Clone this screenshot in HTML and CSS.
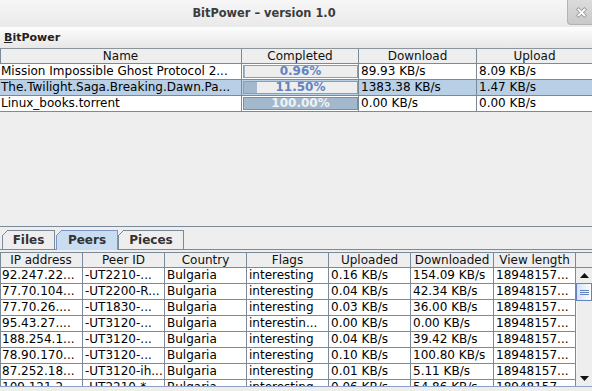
FILE: index.html
```html
<!DOCTYPE html>
<html lang="en">
<head>
    <meta charset="UTF-8">
    <title>BitPower - version 1.0</title>
    <link rel="stylesheet" href="styles.css">
</head>
<body>
    <div class="titlebar">
        <span class="title">BitPower – version 1.0</span>
        <div class="close">
            <svg width="24" height="24" viewBox="0 0 24 24">
                <path d="M10.5 9.5l6 6M16.5 9.5l-6 6" stroke="#9a9a9a" stroke-width="3.6" stroke-linecap="square"/>
                <path d="M10.5 9.5l6 6M16.5 9.5l-6 6" stroke="#ffffff" stroke-width="1.8" stroke-linecap="square"/>
            </svg>
        </div>
    </div>

    <div class="menubar">
        <span class="menu"><u>B</u>itPower</span>
    </div>

    <div class="torrents">
        <div class="row torrent-row head">
            <div class="cell first">Name</div>
            <div class="cell">Completed</div>
            <div class="cell">Download</div>
            <div class="cell last">Upload</div>
        </div>
        <div class="row torrent-row">
            <div class="cell">Mission Impossible Ghost Protocol 2...</div>
            <div class="cell bar-cell">
                <div class="progress"><div class="fill" style="width: 0.96%"></div><span>0.96%</span></div>
            </div>
            <div class="cell">89.93 KB/s</div>
            <div class="cell last">8.09 KB/s</div>
        </div>
        <div class="row torrent-row selected">
            <div class="cell">The.Twilight.Saga.Breaking.Dawn.Pa...</div>
            <div class="cell bar-cell">
                <div class="progress"><div class="fill" style="width: 11.5%"></div><span>11.50%</span></div>
            </div>
            <div class="cell">1383.38 KB/s</div>
            <div class="cell last">1.47 KB/s</div>
        </div>
        <div class="row torrent-row">
            <div class="cell">Linux_books.torrent</div>
            <div class="cell bar-cell">
                <div class="progress done"><div class="fill" style="width: 100%"></div><span>100.00%</span></div>
            </div>
            <div class="cell">0.00 KB/s</div>
            <div class="cell last">0.00 KB/s</div>
        </div>
    </div>

    <div class="split"></div>

    <div class="tabs">
        <div class="tab tab-files">Files</div>
        <div class="tab tab-peers active">Peers</div>
        <div class="tab tab-pieces">Pieces</div>
    </div>

    <div class="tab-gap"></div>

    <div class="peers">
        <div class="peer-table">
            <div class="row peer-row head">
                <div class="cell first">IP address</div>
                <div class="cell">Peer ID</div>
                <div class="cell">Country</div>
                <div class="cell">Flags</div>
                <div class="cell">Uploaded</div>
                <div class="cell">Downloaded</div>
                <div class="cell">View length</div>
            </div>
            <div class="peer-body">
                <div class="row peer-row">
                    <div class="cell first">92.247.22...</div><div class="cell">-UT2210-...</div><div class="cell">Bulgaria</div><div class="cell">interesting</div><div class="cell">0.16 KB/s</div><div class="cell">154.09 KB/s</div><div class="cell">18948157...</div>
                </div>
                <div class="row peer-row">
                    <div class="cell first">77.70.104...</div><div class="cell">-UT2200-R...</div><div class="cell">Bulgaria</div><div class="cell">interesting</div><div class="cell">0.04 KB/s</div><div class="cell">42.34 KB/s</div><div class="cell">18948157...</div>
                </div>
                <div class="row peer-row">
                    <div class="cell first">77.70.26....</div><div class="cell">-UT1830-...</div><div class="cell">Bulgaria</div><div class="cell">interesting</div><div class="cell">0.03 KB/s</div><div class="cell">36.00 KB/s</div><div class="cell">18948157...</div>
                </div>
                <div class="row peer-row">
                    <div class="cell first">95.43.27....</div><div class="cell">-UT3120-...</div><div class="cell">Bulgaria</div><div class="cell">interestin...</div><div class="cell">0.00 KB/s</div><div class="cell">0.00 KB/s</div><div class="cell">18948157...</div>
                </div>
                <div class="row peer-row">
                    <div class="cell first">188.254.1...</div><div class="cell">-UT3120-...</div><div class="cell">Bulgaria</div><div class="cell">interesting</div><div class="cell">0.04 KB/s</div><div class="cell">39.42 KB/s</div><div class="cell">18948157...</div>
                </div>
                <div class="row peer-row">
                    <div class="cell first">78.90.170...</div><div class="cell">-UT3120-...</div><div class="cell">Bulgaria</div><div class="cell">interesting</div><div class="cell">0.10 KB/s</div><div class="cell">100.80 KB/s</div><div class="cell">18948157...</div>
                </div>
                <div class="row peer-row">
                    <div class="cell first">87.252.18...</div><div class="cell">-UT3120-ih...</div><div class="cell">Bulgaria</div><div class="cell">interesting</div><div class="cell">0.01 KB/s</div><div class="cell">5.11 KB/s</div><div class="cell">18948157...</div>
                </div>
                <div class="row peer-row">
                    <div class="cell first">109.121.2...</div><div class="cell">-UT2210-*...</div><div class="cell">Bulgaria</div><div class="cell">interesting</div><div class="cell">0.06 KB/s</div><div class="cell">54.86 KB/s</div><div class="cell">18948157...</div>
                </div>
            </div>
        </div>
        <div class="vscroll">
            <div class="corner"></div>
            <div class="scrollbar">
                <div class="arrow">
                    <svg width="9" height="5" viewBox="0 0 9 5"><path d="M0 5L4.5 0L9 5Z" fill="#111"/></svg>
                </div>
                <div class="thumb"><div class="grip"></div></div>
                <div class="track"></div>
                <div class="arrow">
                    <svg width="9" height="5" viewBox="0 0 9 5"><path d="M0 0L4.5 5L9 0Z" fill="#111"/></svg>
                </div>
            </div>
        </div>
    </div>

    <div class="bottom"></div>
</body>
</html>
```

FILE: styles.css
```css
* {
    box-sizing: border-box;
}
html, body {
    margin: 0;
    padding: 0;
}
body {
    width: 592px;
    height: 391px;
    overflow: hidden;
    background-color: #eeeeee;
    font-family: "DejaVu Sans", sans-serif;
    font-size: 12px;
    color: #000;
}

/* window title */
.titlebar {
    position: relative;
    height: 27px;
    display: flex;
    align-items: center;
    justify-content: center;
    padding-right: 64px;
    background: linear-gradient(#f7f7f7, #e9e9e9);
}
.title {
    font-size: 11.4px;
    font-weight: bold;
    color: #3c3c3c;
    padding-bottom: 2px;
}
.close {
    position: absolute;
    top: 0;
    right: 0;
    width: 25px;
    height: 25px;
    background: linear-gradient(#dcdcdc, #c9c9c9);
    border-left: 1px solid #b3b3b3;
    border-bottom: 1px solid #b3b3b3;
    border-bottom-left-radius: 4px;
}
.close svg {
    display: block;
}

.menubar {
    height: 22px;
    display: flex;
    align-items: center;
    padding-left: 4px;
    background: linear-gradient(#fdfdfd, #e7e7e7);
    border-bottom: 1px solid #8d959c;
}
.menu {
    font-size: 11px;
    font-weight: bold;
    color: #222;
}

/* tables */
.row {
    display: grid;
    height: 16px;
    border-bottom: 1px solid #7a8a99;
}
.row.head {
    height: 15px;
    background-color: #eeeeee;
}
.cell {
    padding: 0 2px 0 2px;
    border-right: 1px solid #7a8a99;
    white-space: nowrap;
    overflow: hidden;
    line-height: 15px;
}
.head .cell {
    text-align: center;
    line-height: 14px;
    color: #111;
}
.cell.first {
    border-left: 1px solid #7a8a99;
    padding-left: 1px;
}
.cell.last {
    border-right: none;
}

.torrents {
    height: 177px;
}
.torrent-row {
    grid-template-columns: 242px 117px 118px 1fr;
    background-color: #fff;
}
.torrent-row .cell:first-child {
    padding-left: 1px;
}
.torrent-row.head .cell.first {
    border-left: 1px solid #7a8a99;
}
.torrent-row.selected {
    background-color: #b8cfe5;
}
.bar-cell {
    padding: 1px 0 1px 1px;
}
.progress {
    position: relative;
    height: 13px;
    background-color: #eeeeee;
    border: 1px solid #8d9cb0;
    overflow: hidden;
}
.progress .fill {
    height: 100%;
    background-color: #a3b8cc;
}
.progress span {
    position: absolute;
    left: 0;
    right: 0;
    top: 0;
    text-align: center;
    font-weight: bold;
    line-height: 11px;
    color: #6382bf;
}
.progress.done {
    border-color: #7b8ea9;
}
.progress.done span {
    color: #eef2f6;
}

.split {
    height: 4px;
    border-top: 1px solid #7a8a99;
}

/* tabs */
.tabs {
    display: flex;
    align-items: flex-end;
    height: 20px;
    padding-left: 2px;
    border-bottom: 1px solid #7a8a99;
}
.tab {
    position: relative;
    height: 19px;
    border: 1px solid #7a8a99;
    border-bottom: none;
    font-weight: bold;
    color: #333;
    text-align: center;
    line-height: 18px;
    background-color: #eeeeee;
}
.tab::before {
    content: "";
    position: absolute;
    top: -1px;
    left: -1px;
    width: 6px;
    height: 6px;
    background: linear-gradient(to bottom right, #eeeeee 0 calc(50% - 0.7px), #7a8a99 calc(50% - 0.7px) calc(50% + 0.7px), transparent calc(50% + 0.7px));
}
.tab-files {
    width: 53px;
}
.tab-peers {
    width: 62px;
}
.tab-pieces {
    width: 66px;
}
.tab.active {
    height: 20px;
    margin-bottom: -1px;
    background-color: #c8ddf2;
    border-color: #7d95c4;
}
.tab.active::before {
    background: linear-gradient(to bottom right, #eeeeee 0 calc(50% - 0.7px), #7d95c4 calc(50% - 0.7px) calc(50% + 0.7px), transparent calc(50% + 0.7px));
}
.tab-files, .tab-pieces {
    margin-right: 1px;
}

.tab-gap {
    height: 2px;
}

/* peers */
.peers {
    display: flex;
    border-top: 1px solid #7a8a99;
}
.peer-table {
    width: 576px;
}
.peer-row {
    grid-template-columns: 83px 82px 82px 82px 82px 83px 82px;
    background-color: #fff;
}
.peer-row.head {
    background-color: #eeeeee;
}
.peer-body {
    height: 118px;
    overflow: hidden;
}

.vscroll {
    width: 16px;
}
.corner {
    height: 15px;
    border-bottom: 1px solid #7a8a99;
    background-color: #eeeeee;
}
.scrollbar {
    height: 118px;
    display: flex;
    flex-direction: column;
    background-color: #eeeeee;
}
.arrow {
    height: 15px;
    display: flex;
    align-items: center;
    justify-content: center;
    background-color: #eeeeee;
}
.thumb {
    height: 18px;
    display: flex;
    align-items: center;
    justify-content: center;
    border: 1px solid #6382bf;
    background: linear-gradient(to right, #d4e3f4, #fbfcfe);
}
.grip {
    width: 9px;
    height: 5px;
    background: repeating-linear-gradient(#6382bf 0 1px, transparent 1px 2px);
}
.track {
    flex: 1;
    border-left: 1px solid #f8f8f8;
}

.bottom {
    border-top: 1px solid #8da2c4;
}
```
